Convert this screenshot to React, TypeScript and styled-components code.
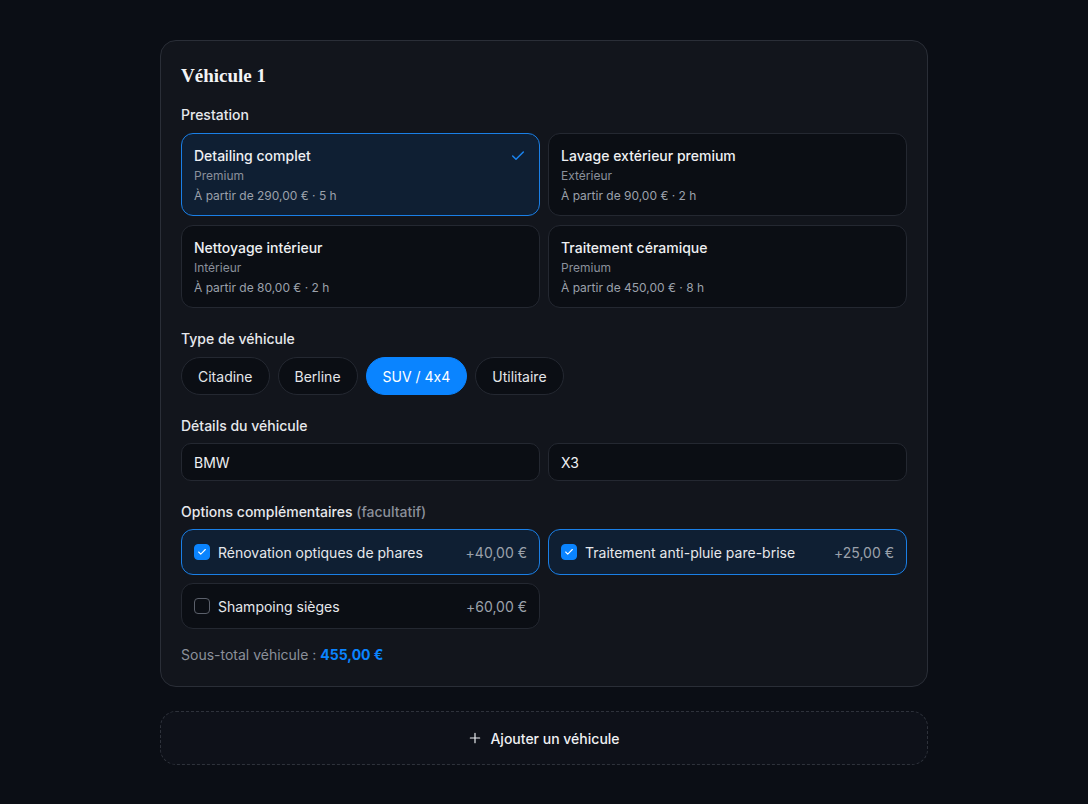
import React from "react";
import styled, { createGlobalStyle, css } from "styled-components";

const GlobalStyle = createGlobalStyle`
  html, body {
    margin: 0;
    padding: 0;
    background: #0b0e15;
  }
  body {
    font-family: Inter, "Noto Sans", sans-serif;
    font-feature-settings: "calt" 0;
    color: #e8eaee;
    -webkit-font-smoothing: antialiased;
  }
  * { box-sizing: border-box; }
`;

const Page = styled.div`
  width: 768px;
  margin: 0 auto;
  padding: 40px 0;
  display: flex;
  flex-direction: column;
  gap: 24px;
`;

const Card = styled.section`
  background: #12151c;
  border: 1px solid #2a2e37;
  border-radius: 16px;
  padding: 20px 20px 21px;
  display: flex;
  flex-direction: column;
`;

const Title = styled.h2`
  margin: 1px 0 15px;
  font-family: "Liberation Serif", "Times New Roman", serif;
  font-weight: 700;
  font-size: 19px;
  line-height: 28px;
  color: #f3f4f6;
`;

const Section = styled.div`
  display: flex;
  flex-direction: column;
  margin-bottom: 21px;
`;

const Label = styled.div<{ $tight?: boolean }>`
  font-size: 14px;
  font-weight: 500;
  line-height: 20px;
  color: #e6e8ec;
  margin-bottom: ${(p) => (p.$tight ? 7 : 8)}px;
`;

const Muted = styled.span`
  color: #8b909a;
`;

const Grid = styled.div<{ $rowGap: number }>`
  display: grid;
  grid-template-columns: 1fr 1fr;
  column-gap: 8px;
  row-gap: ${(p) => p.$rowGap}px;
`;

const selectedBox = css`
  background: #0f1f33;
  border-color: #1a7fe6;
`;

const ServiceCard = styled.div<{ $selected?: boolean }>`
  position: relative;
  border: 1px solid #242831;
  background: #0b0e14;
  border-radius: 12px;
  padding: 12px 12px 11px;
  min-height: 83px;
  display: flex;
  flex-direction: column;
  ${(p) => p.$selected && selectedBox}
`;

const ServiceName = styled.div`
  font-size: 14px;
  font-weight: 500;
  line-height: 20px;
  color: #eef0f3;
`;

const ServiceCat = styled.div`
  font-size: 12px;
  line-height: 17px;
  color: #8a909b;
  margin-top: 1px;
`;

const ServicePrice = styled.div`
  font-size: 12px;
  line-height: 17px;
  color: #9ba1ab;
  margin-top: 3px;
`;

const CheckMark = styled.svg`
  position: absolute;
  top: 14px;
  right: 13px;
`;

const Chips = styled.div`
  display: flex;
  gap: 8px;
`;

const Chip = styled.button<{ $active?: boolean }>`
  height: 38px;
  padding: 0 16px;
  border-radius: 999px;
  border: 1px solid #242831;
  background: #0b0e14;
  color: #e4e6ea;
  font-family: inherit;
  font-feature-settings: "calt" 0;
  font-size: 14px;
  ${(p) =>
    p.$active &&
    css`
      background: #0a84ff;
      border-color: #0a84ff;
      color: #ffffff;
    `}
`;

const Inputs = styled.div`
  display: grid;
  grid-template-columns: 1fr 1fr;
  gap: 8px;
  margin-top: -1px;
`;

const Input = styled.input`
  height: 38px;
  border-radius: 10px;
  border: 1px solid #242831;
  background: #0b0e14;
  color: #eef0f3;
  font-family: inherit;
  font-size: 14px;
  padding: 0 12px;
  outline: none;
`;

const OptionRow = styled.label<{ $checked?: boolean }>`
  display: flex;
  align-items: center;
  gap: 8px;
  height: 46px;
  padding: 0 12px;
  border-radius: 12px;
  border: 1px solid #242831;
  background: #0b0e14;
  font-size: 14px;
  color: #e6e8ec;
  ${(p) => p.$checked && selectedBox}
`;

const Box = styled.span<{ $checked?: boolean }>`
  width: 16px;
  height: 16px;
  border-radius: 4px;
  flex: none;
  display: flex;
  align-items: center;
  justify-content: center;
  border: 1px solid #5b606b;
  ${(p) =>
    p.$checked &&
    css`
      background: #0a84ff;
      border-color: #0a84ff;
    `}
`;

const OptionName = styled.span`
  flex: 1;
`;

const OptionPrice = styled.span`
  color: #9ba1ab;
`;

const Subtotal = styled.div`
  font-size: 14px;
  line-height: 20px;
  color: #8b909a;
  margin-top: -5px;
`;

const Amount = styled.strong`
  color: #0a84ff;
  font-weight: 700;
`;

const AddButton = styled.button`
  height: 54px;
  border-radius: 16px;
  border: 1px dashed #2e323b;
  background: #0e1119;
  color: #eef0f3;
  font-family: inherit;
  font-size: 14px;
  font-weight: 500;
  display: flex;
  align-items: center;
  justify-content: center;
  gap: 8px;
`;

const services = [
  { name: "Detailing complet", cat: "Premium", price: "À partir de 290,00 € · 5 h", selected: true },
  { name: "Lavage extérieur premium", cat: "Extérieur", price: "À partir de 90,00 € · 2 h" },
  { name: "Nettoyage intérieur", cat: "Intérieur", price: "À partir de 80,00 € · 2 h" },
  { name: "Traitement céramique", cat: "Premium", price: "À partir de 450,00 € · 8 h" },
];

const types = ["Citadine", "Berline", "SUV / 4x4", "Utilitaire"];

const options = [
  { name: "Rénovation optiques de phares", price: "+40,00 €", checked: true },
  { name: "Traitement anti-pluie pare-brise", price: "+25,00 €", checked: true },
  { name: "Shampoing sièges", price: "+60,00 €" },
];

const Tick = () => (
  <svg width="10" height="10" viewBox="0 0 24 24" fill="none" stroke="#fff" strokeWidth="2.6" strokeLinecap="round" strokeLinejoin="round">
    <path d="M20 6 9 17l-5-5" />
  </svg>
);

export default function App() {
  return (
    <>
      <GlobalStyle />
      <Page>
        <Card>
          <Title>Véhicule 1</Title>

          <Section>
            <Label>Prestation</Label>
            <Grid $rowGap={9}>
              {services.map((s) => (
                <ServiceCard key={s.name} $selected={s.selected}>
                  <ServiceName>{s.name}</ServiceName>
                  <ServiceCat>{s.cat}</ServiceCat>
                  <ServicePrice>{s.price}</ServicePrice>
                  {s.selected && (
                    <CheckMark width="16" height="16" viewBox="0 0 24 24" fill="none" stroke="#1a84f0" strokeWidth="2.2" strokeLinecap="round" strokeLinejoin="round">
                      <path d="M20 6 9 17l-5-5" />
                    </CheckMark>
                  )}
                </ServiceCard>
              ))}
            </Grid>
          </Section>

          <Section>
            <Label>Type de véhicule</Label>
            <Chips>
              {types.map((t) => (
                <Chip key={t} $active={t === "SUV / 4x4"}>
                  {t}
                </Chip>
              ))}
            </Chips>
          </Section>

          <Section>
            <Label>Détails du véhicule</Label>
            <Inputs>
              <Input defaultValue="BMW" />
              <Input defaultValue="X3" />
            </Inputs>
          </Section>

          <Section>
            <Label $tight>
              Options complémentaires <Muted>(facultatif)</Muted>
            </Label>
            <Grid $rowGap={8}>
              {options.map((o) => (
                <OptionRow key={o.name} $checked={o.checked}>
                  <Box $checked={o.checked}>{o.checked && <Tick />}</Box>
                  <OptionName>{o.name}</OptionName>
                  <OptionPrice>{o.price}</OptionPrice>
                </OptionRow>
              ))}
            </Grid>
          </Section>

          <Subtotal>
            Sous-total véhicule : <Amount>455,00 €</Amount>
          </Subtotal>
        </Card>

        <AddButton>
          <svg width="14" height="14" viewBox="0 0 24 24" fill="none" stroke="#eef0f3" strokeWidth="2" strokeLinecap="round">
            <path d="M12 4v16M4 12h16" />
          </svg>
          Ajouter un véhicule
        </AddButton>
      </Page>
    </>
  );
}
